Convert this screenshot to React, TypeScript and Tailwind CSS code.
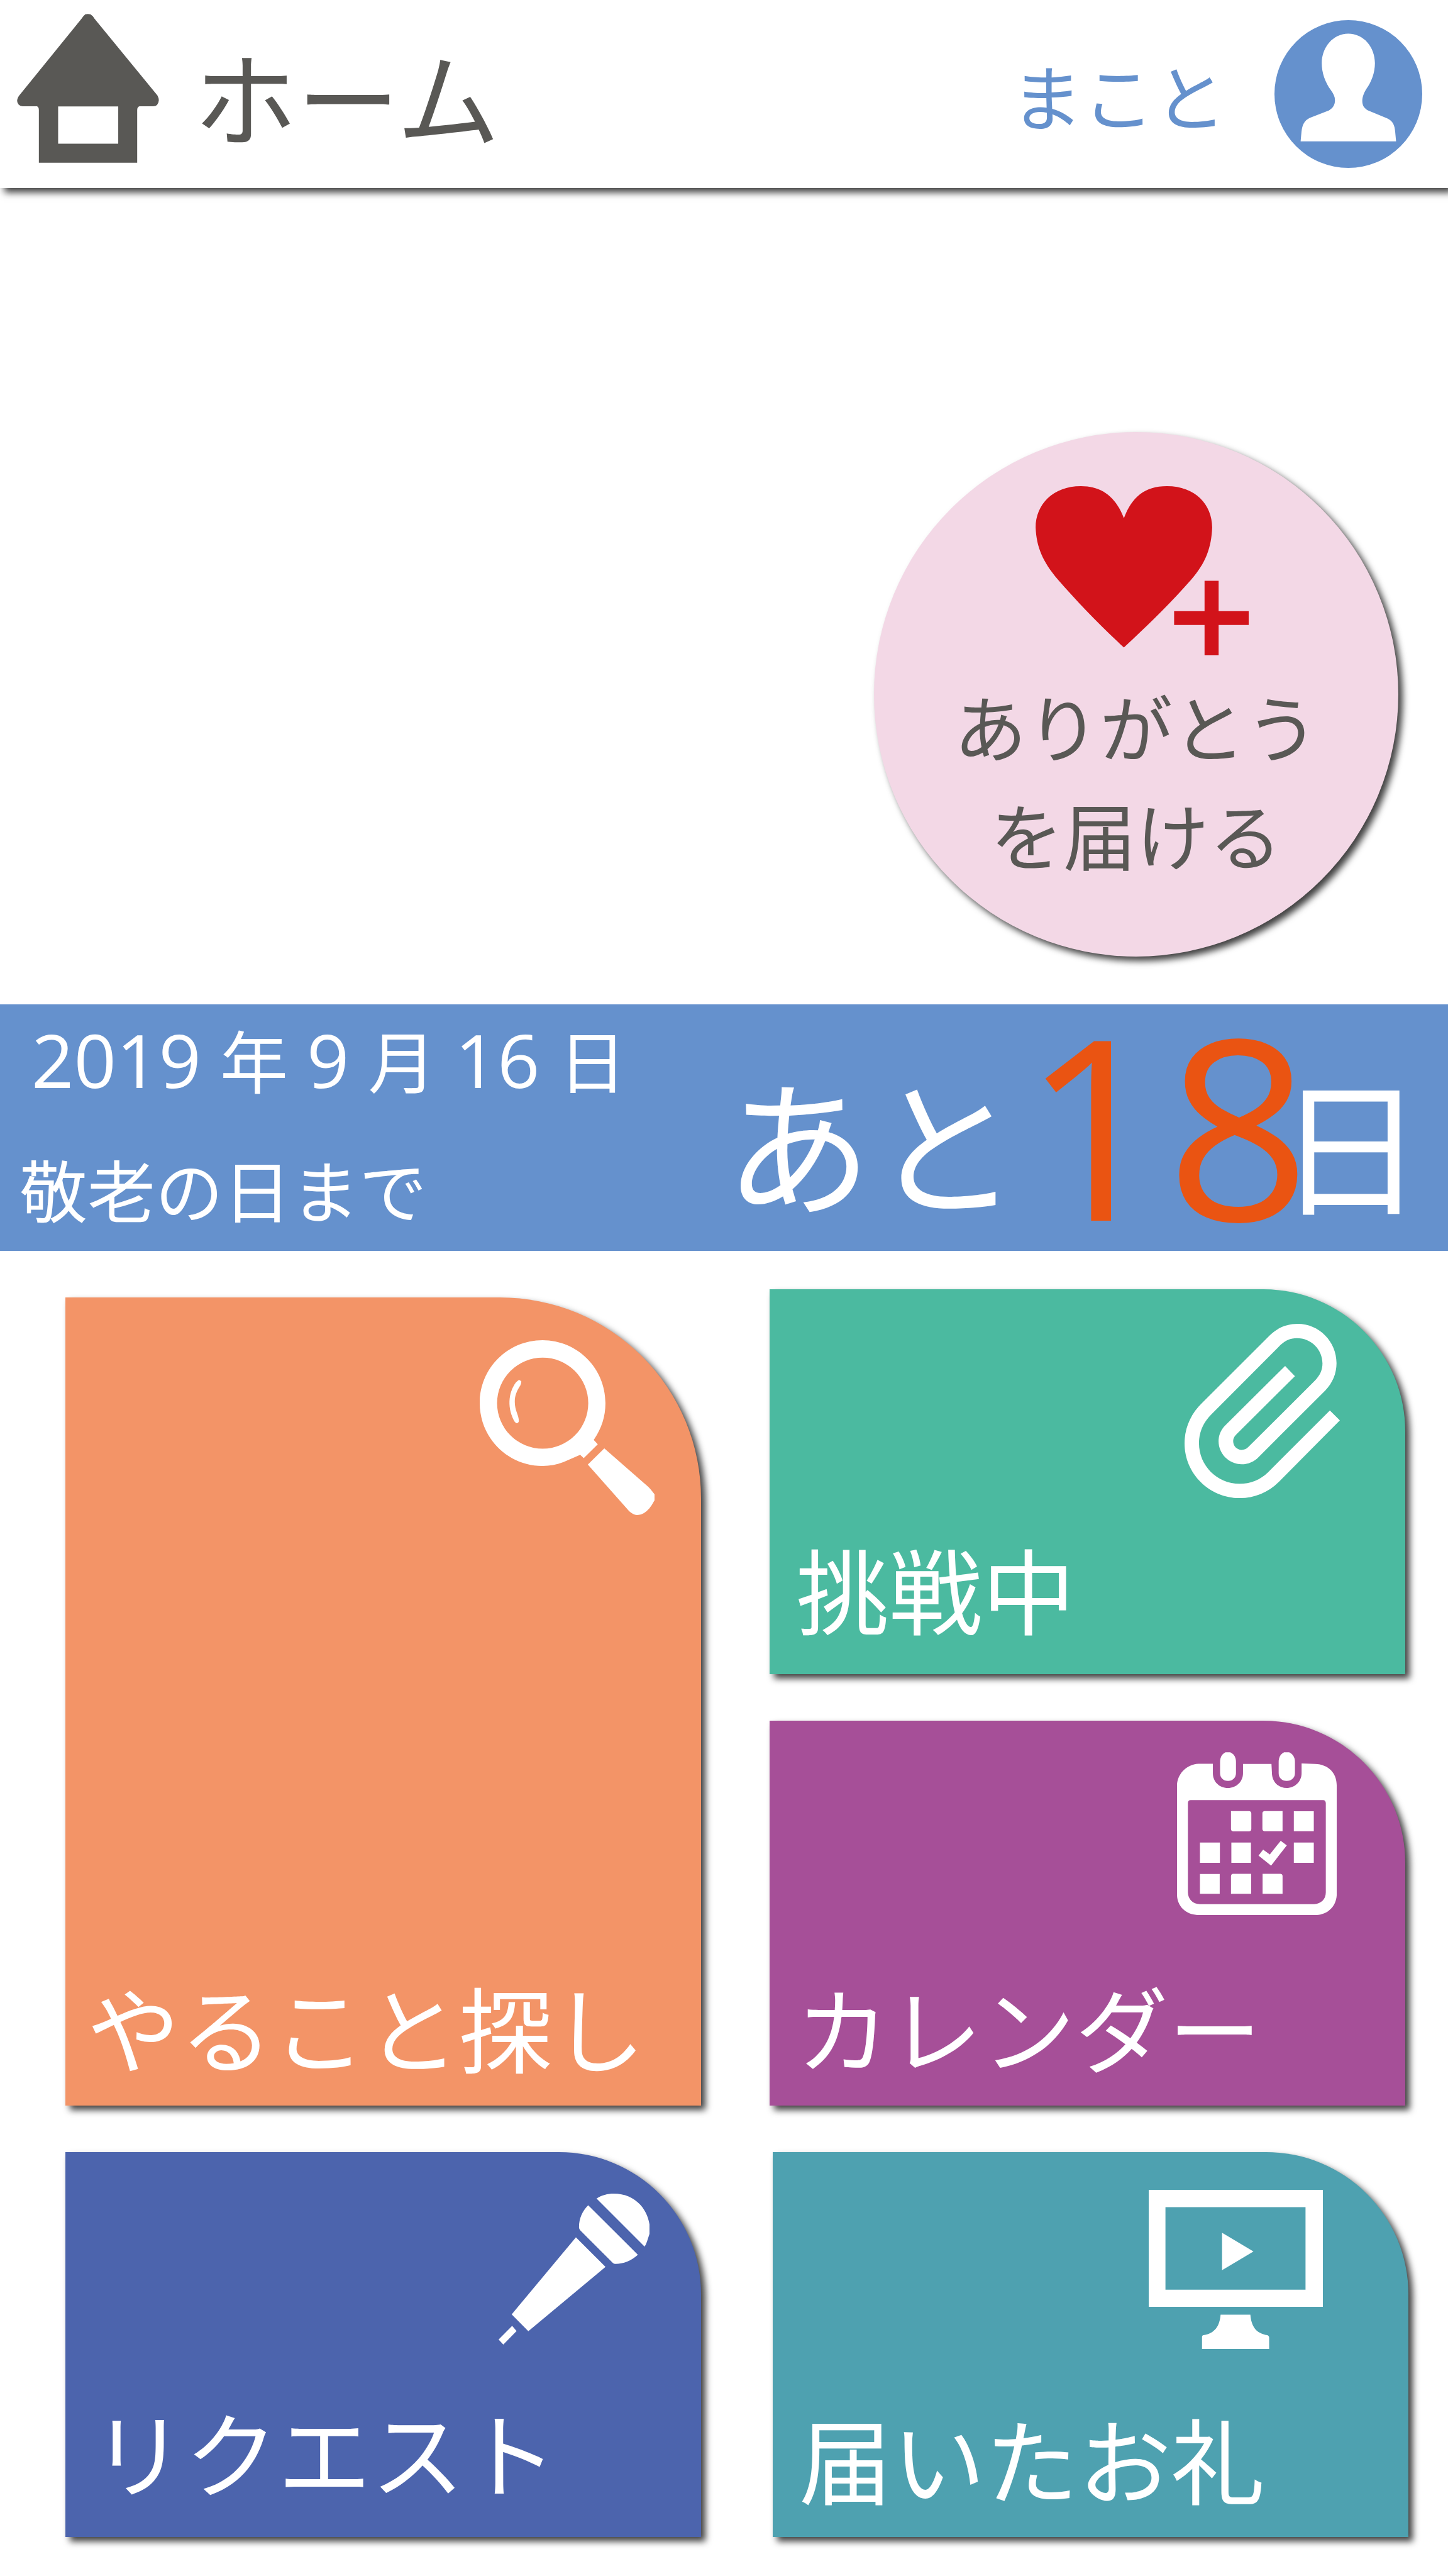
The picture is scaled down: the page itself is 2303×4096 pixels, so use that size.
import type { ReactNode } from "react";

function HouseIcon() {
  return (
    <svg viewBox="53 105 435 1106" preserveAspectRatio="none" fill="#595855" aria-hidden="true" className="mt-[22px] h-[237px] w-[226px] shrink-0 self-start">
      <path
        fillRule="evenodd"
        d="M262 108Q270 104 278 108Q285 118 290 140L483 710Q492 750 482 780Q478 790 470 791H428Q421 795 421 820V1210H120V820Q120 795 114 791H70Q63 790 58 778Q48 750 60 710L251 140Q257 118 262 108ZM179 792V1069H363V792Z"
      />
    </svg>
  );
}

function AvatarIcon() {
  return (
    <svg viewBox="978 150 503 1098" preserveAspectRatio="none" aria-hidden="true" className="size-[235px] shrink-0">
      <ellipse cx="1229.5" cy="699" rx="251.5" ry="549" fill="#6591cd" />
      <path
        fill="#fff"
        d="M1229 250C1282 250 1320 350 1320 470C1320 540 1308 610 1291 660C1280 700 1277 725 1277 752C1277 785 1284 807 1296 820L1362 880C1382 902 1387 930 1389 980L1392 1051H1067L1070 980C1073 925 1080 897 1098 877L1164 820C1178 802 1184 778 1184 745C1184 720 1179 697 1170 670C1150 610 1139 540 1139 470C1139 350 1178 250 1229 250Z"
      />
    </svg>
  );
}

function HeartPlusIcon() {
  return (
    <svg viewBox="455 198 590 474" preserveAspectRatio="none" fill="#d2131a" aria-hidden="true" className="h-[269px] w-[357px]">
      <path d="M717 288C738 228 772 198 830 198C905 198 949 250 949 314C947 370 932 414 893 461C835 531 776 592 717 650C658 592 600 529 542 458C505 411 487 370 485 314C485 250 530 198 604 198C660 198 696 229 717 288Z" />
      <path d="M929 463H966V548H1045V587H966V672H929V587H849V548H929Z" />
    </svg>
  );
}

function SearchIcon() {
  return (
    <svg viewBox="126 325 1072 1073" preserveAspectRatio="none" fill="#fff" aria-hidden="true" className="size-[278px]">
      <path
        fillRule="evenodd"
        d="M511 325C725 325 897 497 897 711C897 795 872 869 825 937L850 964L764 1049L742 1028L640 1073C598 1089 556 1097 511 1097C298 1097 126 925 126 711C126 497 298 325 511 325ZM512 432A279 279 0 1 0 512 991A279 279 0 1 0 512 432Z"
      />
      <path d="M367 568L381 577Q382 590 376 601C352 638 341 665 341 704C341 757 366 785 366 821Q364 834 352 834Q345 833 340 825C296 749 297 649 350 582Z" />
      <path d="M890 989L1158 1223Q1175 1239 1198 1271V1307Q1182 1338 1166 1357Q1130 1398 1090 1398Q1066 1396 1043 1375L789 1088Z" />
    </svg>
  );
}

function ClipIcon() {
  return (
    <svg viewBox="146 221 840 1072" preserveAspectRatio="none" fill="#fff" aria-hidden="true" className="h-[277px] w-[247px]">
      <path d="M932 754L986 815L657 1192C599 1258 526 1293 444 1293C280 1293 146 1142 146 956C146 862 180 775 240 709L608 291C650 244 700 221 758 221C874 221 968 330 968 463C968 525 947 585 908 630L547 1040C522 1069 491 1085 455 1085C387 1085 330 1022 330 943C330 906 343 873 366 846L690 480L743 543L427 900C414 915 409 927 409 944C409 973 430 997 455 997C469 997 480 991 490 980L852 569C878 539 892 505 892 465C892 380 833 309 753 309C719 309 690 324 665 351L290 779C247 828 224 888 224 955C224 1093 322 1205 444 1205C503 1205 555 1181 597 1135Z" />
    </svg>
  );
}

function CalendarIcon() {
  return (
    <svg viewBox="104 226 864 1154" preserveAspectRatio="none" fill="#fff" aria-hidden="true" className="h-[259px] w-[254px]">
      <path
        fillRule="evenodd"
        d="M220 308H298V375C298 435 333 480 379 480C425 480 461 435 461 375V310H615L618 385C622 440 655 480 697 480C741 480 778 435 778 375V306L850 309C925 312 968 375 968 460V1240C965 1318 920 1378 858 1380H214C152 1376 106 1320 104 1240V460C106 380 155 312 220 308ZM178 566Q163 566 163 587V1220C164 1268 188 1302 228 1303H846C884 1301 909 1268 909 1220V587Q908 566 894 566Z"
      />
      <path d="M366 227H392C412 238 423 262 423 295V375C423 407 405 430 380 430C354 430 337 407 337 375V295C337 262 348 238 366 227ZM683 227H711C731 240 742 262 742 295V375C742 407 724 430 697 430C671 430 654 407 654 375V295C654 262 665 238 683 227Z" />
      <path d="M396 644H495Q506 646 506 662V770Q506 786 495 787H407Q396 785 396 770ZM577 644H675V786H577Q566 784 566 770V660Q566 646 577 644ZM736 645H844V786H736ZM228 867H336V1010H228ZM398 867H504V1010H398ZM736 867H844V1010H736ZM228 1089H335V1230H228ZM407 1088H505V1230H396V1106Q397 1089 407 1088ZM567 1088H664Q675 1090 675 1104V1230H567Z" />
      <path d="M665 854L698 886L613 1030L545 959L570 917L606 951Z" />
    </svg>
  );
}

function MicIcon() {
  return (
    <svg viewBox="137 345 923 1069" preserveAspectRatio="none" fill="#fff" aria-hidden="true" className="size-[240px]">
      <path d="M736 380C768 356 803 345 842 345C955 345 1040 430 1060 562V630L1045 683Q1039 705 1030 720Z" />
      <path d="M685 427L989 778C945 822 901 842 852 843Q843 843 836 836L637 606Q628 595 629 580C629 520 650 467 685 427Z" />
      <path d="M610 655L791 864L319 1319L217 1200Z" />
      <path d="M220 1282L247 1318L166 1414L137 1378Z" />
    </svg>
  );
}

function MonitorIcon() {
  return (
    <svg viewBox="119 316 843 1128" preserveAspectRatio="none" fill="#fff" aria-hidden="true" className="h-[253px] w-[277px]">
      <path fillRule="evenodd" d="M119 316H962V1145H119ZM200 439V1024H878V439Z" />
      <path d="M474 620L626 753L474 886Z" />
      <path d="M467 1201H611C616 1285 638 1333 693 1346Q702 1351 702 1365V1444H377V1360Q377 1347 384 1346C437 1335 462 1285 467 1201Z" />
    </svg>
  );
}

type TileProps = {
  label: string;
  icon: ReactNode;
  className: string;
  iconClassName: string;
};

function Tile({ label, icon, className, iconClassName }: TileProps) {
  return (
    <a
      href="#"
      className={
        "flex min-h-[612px] flex-col justify-between text-white shadow-[7px_7px_11px_rgba(0,0,0,0.75)] " + className
      }
    >
      <span className={"self-end " + iconClassName}>{icon}</span>
      <span className="text-[148px] leading-none">{label}</span>
    </a>
  );
}

function DateNumber({ children }: { children: string }) {
  return <span className="font-['Open_Sans',sans-serif] text-[118px] leading-[108px]">{children}</span>;
}

export default function App() {
  return (
    <div className="min-h-screen bg-white pb-[61px] font-['Noto_Sans_CJK_JP',sans-serif]">
      <header className="flex min-h-[299px] items-center bg-white pr-[41px] pl-[27px] shadow-[7px_7px_11px_rgba(0,0,0,0.75)]">
        <HouseIcon />
        <h1 className="ml-[55px] text-[164px] leading-none text-[#595855]">ホーム</h1>
        <a href="#" className="ml-auto flex items-center gap-[77px]">
          <span className="text-[114px] leading-none text-[#6591cd]">まこと</span>
          <AvatarIcon />
        </a>
      </header>

      <main>
        <section className="flex justify-end pt-[388px] pr-[79px] pb-[76px]">
          <button
            type="button"
            className="flex size-[834px] flex-col items-center rounded-full bg-[#f3d8e6] pt-[86px] text-[#595855] shadow-[7px_7px_11px_rgba(0,0,0,0.75)]"
          >
            <HeartPlusIcon />
            <span className="mt-6 text-[116px] leading-[172px]">
              ありがとう
              <br />
              を届ける
            </span>
          </button>
        </section>

        <section className="flex items-end justify-between bg-[#6591cd] pr-[38px] pb-[14px] pl-[31px] text-white">
          <div className="flex flex-col gap-24 pb-8 text-[108px] leading-none">
            <time dateTime="2019-09-16" className="ml-[19px] flex items-baseline gap-[30px]">
              <DateNumber>2019</DateNumber>
              <span>年</span>
              <DateNumber>9</DateNumber>
              <span>月</span>
              <DateNumber>16</DateNumber>
              <span>日</span>
            </time>
            <p>敬老の日まで</p>
          </div>
          <p className="flex items-end text-[234px] leading-none">
            <span className="pb-[45px]">あと</span>
            <span className="relative z-10 ml-[6px] font-['Open_Sans',sans-serif] text-[400px] leading-[378px] text-[#ea5412]">
              18
            </span>
            <span className="-ml-[53px] pb-[45px]">日</span>
          </p>
        </section>

        <nav className="flex flex-col gap-[74px] pt-[61px] pl-[104px]">
          <div className="grid grid-cols-2 gap-[109px] pr-[68px]">
            <Tile
              label="やること探し"
              icon={<SearchIcon />}
              className="mt-[13px] rounded-tr-[320px] bg-[#f39467] pb-[53px] pl-[34px]"
              iconClassName="mt-[68px] mr-[74px]"
            />
            <div className="flex flex-col gap-[74px]">
              <Tile
                label="挑戦中"
                icon={<ClipIcon />}
                className="rounded-tr-[226px] bg-[#4bbaa0] pb-16 pl-[42px]"
                iconClassName="mt-[55px] mr-[104px]"
              />
              <Tile
                label="カレンダー"
                icon={<CalendarIcon />}
                className="rounded-tr-[226px] bg-[#a64f98] pb-[53px] pl-[42px]"
                iconClassName="mt-[50px] mr-[109px]"
              />
            </div>
          </div>
          <div className="grid grid-cols-2 gap-[114px] pr-[63px]">
            <Tile
              label="リクエスト"
              icon={<MicIcon />}
              className="rounded-tr-[226px] bg-[#4c64ad] pb-16 pl-[42px]"
              iconClassName="mt-[66px] mr-[82px]"
            />
            <Tile
              label="届いたお礼"
              icon={<MonitorIcon />}
              className="rounded-tr-[226px] bg-[#4ea1b0] pb-[53px] pl-[42px]"
              iconClassName="mt-[60px] mr-[136px]"
            />
          </div>
        </nav>
      </main>
    </div>
  );
}
